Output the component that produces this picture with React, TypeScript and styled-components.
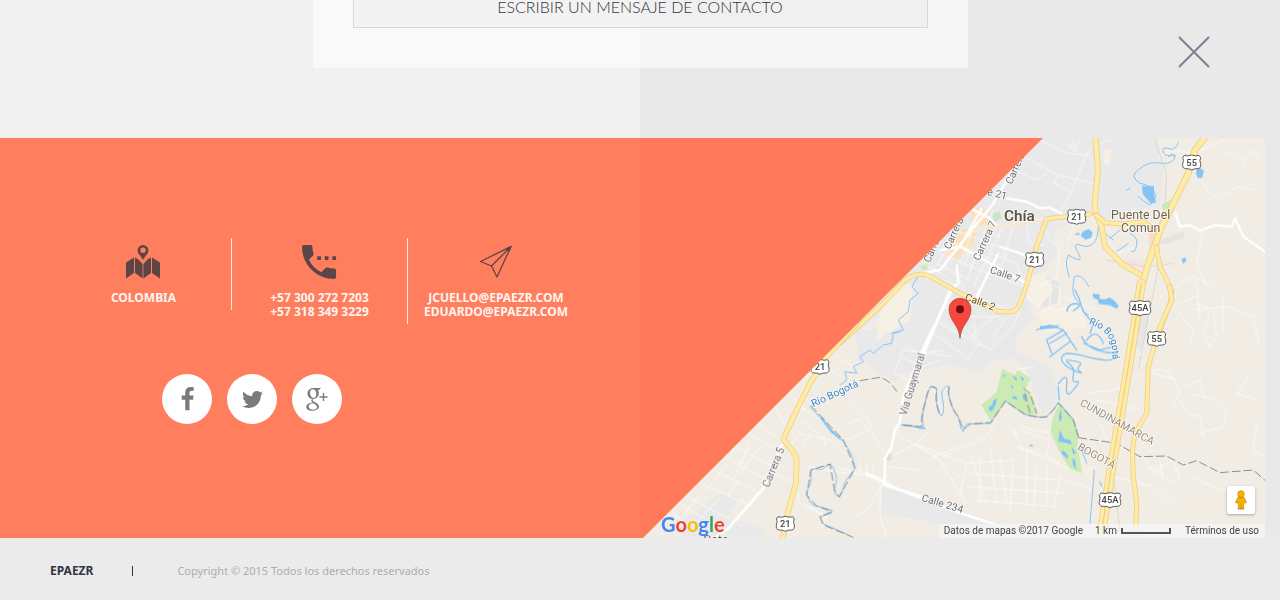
import React from "react";
import styled, { createGlobalStyle } from "styled-components";
import { FaTwitter } from "react-icons/fa";

const GlobalStyle = createGlobalStyle`
  *, *::before, *::after { box-sizing: border-box; }
  body {
    margin: 0;
    background: #ebebeb;
    font-family: "Noto Sans", "Open Sans", sans-serif;
  }
`;

const Page = styled.main`
  position: relative;
  display: flex;
  flex-direction: column;
  min-height: 100vh;
  overflow: hidden;
`;

const Intro = styled.section`
  display: flex;
  justify-content: center;
  padding-bottom: 70px;
  background: linear-gradient(90deg, #f1f1f1 50%, #e9e9e9 50%);
`;

const FormCard = styled.div`
  width: 100%;
  max-width: 655px;
  margin-top: -14px;
  padding: 0 40px 40px;
  background: rgba(255, 255, 255, 0.6);
`;

const MessageButton = styled.button`
  display: block;
  width: 100%;
  height: 42px;
  padding: 0;
  border: 1px solid #d6d8d8;
  background: rgba(0, 0, 0, 0.024);
  color: #33333a;
  font: 300 16px/20px Lato, sans-serif;
  text-transform: uppercase;
  cursor: pointer;
`;

const CloseButton = styled.button`
  position: absolute;
  top: 36px;
  right: 70px;
  width: 32px;
  height: 32px;
  padding: 0;
  border: 0;
  background: none;
  color: #7d8194;
  cursor: pointer;
  svg { display: block; }
`;

const ContactBand = styled.section`
  display: grid;
  grid-template-columns: 1fr 1fr;
  min-height: 400px;
`;

const ContactPane = styled.div`
  padding: 100px 0 0 56px;
  background: #ff7e5d;
`;

const ContactList = styled.address`
  display: flex;
  align-items: flex-start;
  font-style: normal;
`;

const ContactItem = styled.div`
  display: flex;
  flex-direction: column;
  align-items: center;
  gap: 12px;
  width: 176px;
  padding: 7px 0 5px;
  color: #fff4f0;
  font: 700 12px/14px "Noto Sans", sans-serif;
  white-space: nowrap;
  &:not(:last-child) { border-right: 1px solid #ffe6df; }
  > svg { display: block; color: #5c4547; }
`;

const ContactLines = styled.div`
  display: flex;
  flex-direction: column;
  align-items: center;
`;

const ContactLink = styled.a`
  color: inherit;
  text-decoration: none;
`;

const SocialList = styled.nav`
  display: flex;
  gap: 15px;
  margin-top: 50px;
  padding-left: 106px;
`;

const SocialLink = styled.a`
  display: flex;
  align-items: center;
  justify-content: center;
  width: 50px;
  height: 50px;
  border-radius: 50%;
  background: #fff;
  color: #7a7a7a;
`;

const MapColumn = styled.div`
  position: relative;
  padding-right: 15px;
  background: #e9e9e9;
  &::before {
    content: "";
    position: absolute;
    inset: 0;
    z-index: 1;
    background: #ff795a;
    clip-path: polygon(0 0, 403px 0, 3px 100%, 0 100%);
    pointer-events: none;
  }
`;

const MapFrame = styled.div`
  position: relative;
  height: 100%;
  overflow: hidden;
  background: #f1ede5;
`;

const MapDrawing = styled.svg`
  display: block;
  width: 100%;
  height: 400px;
`;

const GoogleMark = styled.a`
  position: absolute;
  left: 21px;
  bottom: 1px;
  z-index: 2;
  font: 700 20px/26px Lato, sans-serif;
  text-decoration: none;
`;

const MarkLetter = styled.span<{ $color: string }>`
  color: ${(p) => p.$color};
`;

const MapCredits = styled.div`
  position: absolute;
  right: 0;
  bottom: 0;
  display: flex;
  align-items: center;
  gap: 12px;
  height: 14px;
  padding: 0 6px 0 5px;
  background: rgba(245, 245, 245, 0.75);
  color: #444;
  font: 400 10px/14px Roboto, sans-serif;
  white-space: nowrap;
`;

const MapScale = styled.span`
  display: flex;
  align-items: center;
  gap: 4px;
  margin-right: 2px;
`;

const ScaleBar = styled.span`
  width: 50px;
  height: 6px;
  border: 2px solid #555;
  border-top: 0;
`;

const CreditLink = styled.a`
  color: inherit;
  text-decoration: none;
`;

const StreetViewButton = styled.button`
  position: absolute;
  right: 10px;
  bottom: 24px;
  display: flex;
  align-items: center;
  justify-content: center;
  width: 28px;
  height: 28px;
  padding: 0;
  border: 0;
  border-radius: 2px;
  background: #fff;
  box-shadow: 0 1px 3px rgba(0, 0, 0, 0.3);
  cursor: pointer;
`;

const Footer = styled.footer`
  display: flex;
  align-items: center;
  flex: 1;
  padding: 4px 50px 0;
  min-height: 62px;
  background: #ebebeb;
`;

const Brand = styled.strong`
  color: #34373f;
  font-size: 12px;
  line-height: 16px;
`;

const Copyright = styled.small`
  margin-left: 39px;
  padding-left: 44px;
  color: #adadad;
  font-size: 11px;
  line-height: 10px;
  border-left: 1px solid #34373f;
`;

const MapIcon = () => (
  <svg width="36" height="34" viewBox="1 0 36 34" fill="currentColor" aria-hidden="true">
    <path fillRule="evenodd" d="M18 0a5.4 5.4 0 0 0-5.4 5.4c0 3.4 3.4 5.400 5.400 9.600 2-4.200 5.400-6.200 5.400-9.600A5.400 5.400 0 0 0 18 0zm0 2.600a2.700 2.700 0 1 1 0 5.400 2.700 2.700 0 0 1 0-5.400z" />
    <path d="M1 17.500l8-5V28l-8 5.500zM10 12.500l3.500 2L17.600 19v14.500L10 28zM18.400 19l4.100-4.500 3.500-2V28l-7.600 5.500zM27 12.500l8 5v16L27 28z" />
  </svg>
);

const PhoneIcon = () => (
  <svg width="36" height="34" viewBox="3 3 19 18" fill="currentColor" aria-hidden="true">
    <path d="M11 9h2v2h-2zM15 9h2v2h-2zM19 9h2v2h-2zM20 15.500c-1.250 0-2.450-.2-3.570-.57-.35-.11-.74-.03-1.020.24l-2.200 2.200a15.050 15.050 0 0 1-6.590-6.580l2.200-2.210c.28-.27.36-.66.25-1.010A11.400 11.400 0 0 1 8.500 4c0-.55-.45-1-1-1H4c-.55 0-1 .45-1 1 0 9.390 7.610 17 17 17 .55 0 1-.45 1-1v-3.500c0-.55-.45-1-1-1z" />
  </svg>
);

const PlaneIcon = () => (
  <svg width="34" height="34" viewBox="0 0 34 34" fill="none" stroke="currentColor" strokeWidth="1.300" strokeLinejoin="round" aria-hidden="true">
    <path d="M32 1.500L1.500 16.500l11 4.500L18 32zM12.500 21L32 1.500" />
    <path d="M32 1.500l-5 3 3 1.500z" fill="currentColor" />
  </svg>
);

const FacebookIcon = () => (
  <svg width="25" height="25" viewBox="0 0 1792 1792" fill="currentColor" aria-hidden="true">
    <path d="M1343 12v264h-157q-86 0-116 36t-30 108v189h293l-39 296h-254v759h-306v-759h-255v-296h255v-218q0-186 104-288.500t277-102.500q147 0 228 12z" />
  </svg>
);

const GooglePlusIcon = () => (
  <svg width="22" height="24" viewBox="0 0 22 24" fill="none" stroke="currentColor" aria-hidden="true">
    <path fill="currentColor" stroke="none" fillRule="evenodd" d="M7.300 1C4 1 1.500 3.300 1.500 6.600c0 3.200 2.400 5.400 5.600 5.400 3.400 0 5.700-2.500 5.700-5.700C12.800 3 10.500 1 7.300 1zM6.800 2.200c2.100 0 3.500 2.100 3.500 4.700 0 2.400-1 4-2.800 4C5.400 10.900 4 8.600 4 6.100c0-2.300 1-3.900 2.800-3.900z" />
    <path d="M7.300 1.500h7l-1.400 1h-3" strokeWidth="1" />
    <path fill="currentColor" stroke="none" fillRule="evenodd" d="M8 11.500c-2 1-1.700 1.900-.5 2.700 2.800 1.800 5.500 2.600 5.500 5.400 0 2.700-2.900 4.200-6.500 4.200C2.800 23.800.3 22.400.3 20c0-2.800 3-4.200 6.400-4.500-1.700-1.200-2-2.600-.2-4zM7.200 16.300c-2.500.1-4.500 1.200-4.500 3.200 0 2 1.800 3.200 4.400 3.200 2.500 0 3.900-1.100 3.900-2.700 0-1.700-1.500-2.400-3.800-3.700z" />
    <path d="M17.500 6v8M13.500 10h8" strokeWidth="1.400" />
  </svg>
);

const Pegman = () => (
  <svg width="14" height="20" viewBox="0 0 14 20" aria-hidden="true">
    <ellipse cx="7" cy="18.500" rx="4" ry="1.200" fill="#c9c9c9" />
    <path d="M4 7h6l2.500 5.500-1.500.7-1-1.700L9.300 19H4.700L4 11.500l-1 1.700-1.500-.7z" fill="#f5b400" stroke="#d68a00" strokeWidth=".7" />
    <circle cx="7" cy="4" r="3.300" fill="#f5b400" stroke="#d68a00" strokeWidth=".7" />
    <path d="M4.700 7h4.600L7 9.500z" fill="#e08c00" />
    <path d="M7 13v6" stroke="#d68a00" strokeWidth=".8" />
  </svg>
);

const Shield = ({ x, y, label }: { x: number; y: number; label: string }) => {
  const w = label.length > 2 ? 32 : 27;
  return (
    <g transform={`translate(${x} ${y})`}>
      <path
        d={`M${-w + 5}-21Q${-w / 2}-17 0-22Q${w / 2}-17 ${w - 5}-21L${w}-14Q${w - 5}-6 ${w} 4Q${w + 2} 18 ${w - 9} 19Q8 18 0 23Q-8 18 ${9 - w} 19Q${-w - 2} 18 ${-w} 4Q${5 - w}-6 ${-w}-14Z`}
        fill="#fff" stroke="#5c5c5c" strokeWidth="3"
      />
      <text y="10" textAnchor="middle" fontSize="28" fontWeight="500" fill="#444">{label}</text>
    </g>
  );
};

type LabelProps = {
  x: number; y: number; angle?: number; size?: number; color?: string;
  weight?: number; anchor?: "start" | "middle"; children: string;
};

const MapLabel = ({ x, y, angle = 0, size = 31, color = "#6d6d6d", weight = 400, anchor = "start", children }: LabelProps) => (
  <text
    transform={`translate(${x} ${y}) rotate(${angle})`}
    fontSize={size} fontWeight={weight} fill={color} textAnchor={anchor}
    stroke="#fff" strokeOpacity=".75" strokeWidth="5" strokeLinejoin="round" paintOrder="stroke"
  >
    {children}
  </text>
);

const Highway = ({ d, width = 15 }: { d: string; width?: number }) => (
  <g fill="none" strokeLinejoin="round" strokeLinecap="round">
    <path d={d} stroke="#ecd089" strokeWidth={width} />
    <path d={d} stroke="#ffeba6" strokeWidth={width - 5} />
  </g>
);

/* The drawing uses three units for each pixel; every district has its own origin. */
const NORTH = "translate(660 -24)";
const WEST = "translate(0 576)";
const SOUTH = "translate(780 456)";

const CityMap = () => (
  <MapDrawing viewBox="0 0 1875 1200" preserveAspectRatio="xMinYMin slice" fontFamily="Roboto, sans-serif" role="img" aria-label="Mapa de Chía">
    <rect width="2600" height="1200" fill="#f1ede5" />

    <g fill="#e9e9e9">
      <g transform={NORTH}>
        <path d="M400 24H890L912 120 900 230 800 240 735 270 690 240 640 280 580 300 590 380 540 440 520 520 480 580 440 620 120 620 60 560-60 640Z" />
        <path d="M890 335l80-32 5 18-60 22zM560 440l40 20-10 60-50 10z" fill="#e4e4e2" />
      </g>
      <g transform={SOUTH}>
        <path d="M70 0H395L385 60 410 90 350 130 350 185 440 225 475 290 470 340 430 372 405 320 385 250 340 205 280 210 240 250 150 225 70 240 0 250-130 210-110 130 0 110Z" />
        <path d="M-50 590L0 602 150 650 330 710 370 745H250L120 700-60 670Z" />
        <path d="M720 60l30 10-25 110-15-10z" fill="#e6e6e8" />
      </g>
      <g transform={WEST}>
        <path d="M640 0H860L770 160 720 130 660 90ZM730 470L960 540V620L860 570 730 545ZM240 490L300 500 260 560 380 600 350 625H150L90 600Z" />
        <path d="M740 365l20 10-10 18-15-5z" fill="#dcdcdc" />
      </g>
    </g>

    <g fill="#f6f0e4" transform={NORTH}>
      <path d="M735 55l20 5-5 45-20-5zM500 440l50-10 30 50-40 50-40-20zM70 480l90-20-10 110-100 60zM540 540l130-20 10 70-130 20z" />
      <path d="M330 240l40-10 20 50-50 10zM300 300l50-10-10 60-50 40-40-10z" fill="#fae0bf" />
      <path d="M790 385l55 5 10 28-50-8z" fill="#f7e2e6" />
      <path d="M865 310l30-5 5 60-30 0z" fill="#fbdcc4" />
    </g>

    <g fill="#ccebb4">
      <path transform={NORTH} d="M905 225l30-18 10 18-35 16zM180 410l20-12 8 10-15 14z" />
      <path transform={NORTH} d="M398 250l20-6 8 18-18 14-10-10z" fill="#cfe3cb" />
      <path transform={SOUTH} d="M306 237L345 255 352 240 392 265 375 300 395 315 414 373 375 375 316 333 272 392 243 345 290 305ZM478 338L520 385 535 440 532 470 548 555 512 540 475 480 452 425 458 385Z" />
    </g>

    <g fill="none" stroke="#fff" strokeWidth="3" opacity=".7" strokeLinejoin="round">
      <g transform={NORTH}>
        <path d="M500 85L594 135 720 165M594 135L580 160 640 190M690 50L640 170 600 250M660 30l-20 30M620 45l30 20M635 40l20 20M625 60l15-30M540 30L620 70 690 75M720 40l30-10M440 110L530 150 560 130" />
        <path d="M400 240L380 290 330 420M430 290L400 350 340 470M460 290L430 380M240 370L310 400 520 480M260 330L400 390M230 400L330 450M280 300L420 350M220 440L300 470M300 280L250 420M350 270L300 400M370 300L420 320M390 370L470 400 490 460M330 350l-20 60M360 350l-40 100M415 370L380 450M440 375L410 440M260 360L200 450M190 400L260 440M350 500L450 540M300 450L330 530M250 530L330 560 420 560M400 560L330 620M440 560L400 620" />
        <path d="M500 295L510 340 550 345M560 300L570 330 600 350M520 250L500 290M610 270L640 290 620 340M600 350L590 440 550 460 530 500M550 460L600 470 600 520 540 550M570 450V540M590 540L650 530 670 580M610 500L700 540M500 500L540 530" />
        <path d="M895 80L940 60 1000 70 1090 30M1080 80L1120 60 1150 90 1180 60 1200 90M1150 90L1160 120M1010 140L1060 200 1080 190M1090 200L1130 170 1180 180M1030 290L1010 400 1040 470M740 330L770 370 830 350M900 500L1000 440 1060 470M1000 540L1100 530 1180 560M1010 460L1020 570M1090 500V600M960 520L1030 490" />
      </g>
      <g transform={SOUTH}>
        <path d="M120 100L270 180 340 110 370 30M170 90L230 150 220 100M100 130L200 200M230 150L270 180M200 210L240 160M20 170L60 190 130 180M0 200L70 230 120 210M350 240L400 230M360 420L450 450 440 500 360 470 340 410M360 410L450 430" />
        <path d="M0 440L110 500 200 640M40 460L200 520 340 510M200 520L180 620M210 490L260 640M240 500V650M270 470L290 640M300 500L320 640M340 510L330 660M380 480V640M410 520L400 660M440 530V640M210 550L480 570M200 590L500 610M220 630L470 650M130 500L260 440 290 390M350 470L540 550 590 530M480 560L460 660M500 570L580 600M320 400L350 440M440 500L480 520" />
        <path d="M560 310L640 300 680 290M590 330L680 350 720 360M600 400L620 450M640 560L760 590 840 660M730 500L760 540 820 510 840 570M750 560L790 530M740 530l90 50M780 510l10 70M740 210L760 250 830 270M740 240L800 240 840 300 820 350M850 290L900 270 910 320M870 310L940 330 980 370 970 410 900 430M840 330L860 370 900 380 910 440M830 60L880 120 870 160M890 40L940 60 950 140 930 170 910 130 930 70M1060 90L1080 170M1050 250L1010 310 1070 330M1070 400L1060 480 1090 500M870 560L960 600 1060 590M720 140L680 160M730 190L690 200" />
      </g>
      <g transform={WEST}>
        <path d="M440 180L490 240M400 220L430 280M350 280L420 330M320 310L410 360M290 350L400 410M250 380L380 450M220 420L360 490M180 460L340 530M140 500L310 590M300 320L270 380 310 400M360 350L300 430M260 400L200 480M240 500L150 600M330 340L280 450M420 410L370 440M410 430L460 460 480 520 560 560M440 360L480 310 570 330 640 400M480 270L560 330M510 310L490 350M540 310L560 350M460 220L600 300M500 410L620 430 720 440M620 330L690 300 740 380M690 300L660 270 620 280M600 180L670 250 700 300M480 150L560 110 600 140M580 70L640 110M760 130L790 60 940 80M760 130L830 160M750 380L830 340 870 370 960 440M830 340L870 300M880 380L960 350M640 410L720 460M660 390V440M680 410V450M700 400V450M650 430L590 410M740 410L840 420M730 460L680 540 650 560M720 460V560L740 620M120 520L200 570M100 550L170 610M170 500L130 560M300 450L260 500M490 520L560 560 540 600" />
      </g>
    </g>

    <g fill="none" stroke="#fff" strokeLinejoin="round" strokeLinecap="round">
      <g transform={NORTH} strokeWidth="7">
        <path d="M475 90L400 220 240 420 180 430M440 205L500 215 540 235 570 232 610 255 640 258M340 240L390 265 410 290M560 268L340 300M290 405L295 460 270 480 180 700M420 350L480 370 520 390M365 235L300 350 240 360M300 350L500 460M415 370L350 500" />
        <path d="M945 248L960 290 990 285 1020 302 1065 285 1115 290 1125 265 1150 320 1216 366" />
      </g>
      <path transform={NORTH} d="M560 270L340 300" stroke="#fbe3c2" strokeWidth="6" />
      <g transform={SOUTH} strokeWidth="8">
        <path d="M155 0L60 200M-100 550L0 600 155 660 320 715M240 0L230 25" />
      </g>
      <g transform={WEST} strokeWidth="8">
        <path d="M875 0L840 80 790 200 780 275 765 300 755 350 735 385 733 465 845 500M425 345L370 475 265 595 230 620" />
      </g>
    </g>

    <g fill="none" stroke="#86c3f5" strokeWidth="4" strokeLinejoin="round" strokeLinecap="round">
      <g transform={NORTH}>
        <path d="M955 38Q946 62 932 57T910 55Q905 68 918 75T945 75Q946 88 935 95T910 100Q890 96 870 100T835 120Q820 130 822 140T840 160Q862 162 875 175T887 200 870 225Q852 215 835 200M925 80q10-15 20 0M800 180l10-5M715 290Q715 325 700 340T660 345 655 370 625 375Q616 390 620 410T628 440M686 470Q672 440 655 438T642 450Q636 475 640 490T665 530Q668 548 685 555M650 520Q630 520 625 530T622 545M735 310L760 330M780 300L750 325M810 310Q835 320 830 345T815 365M805 340L770 365" strokeWidth="3" />
        <path d="M180 430L155 470 175 490 150 510 145 545 115 570 130 600 95 610" strokeWidth="3" />
      </g>
      <g transform={SOUTH}>
        <path d="M525 0L535 20 550 65 580 100 570 130M545 140Q560 170 590 180T650 190Q650 208 630 210T580 205 540 195 500 190Q482 195 485 210T520 240 540 245 540 225 500 210M500 215Q525 230 520 255T530 275 520 300 500 285 475 282M475 290L478 330M410 120L450 105 490 120 510 150 530 180M440 150L490 120M450 160L500 130M450 200L510 155M440 150L455 190M500 60Q510 40 530 42T520 62M560 150q30-40 50 10M550 160l50 20 40-10" />
        <path d="M5 405L40 408Q70 420 72 415 62 390 75 340 85 290 95 290 112 292 110 300 106 330 112 350 118 378 125 375 134 372 130 340 122 305 128 300 144 282 147 290 142 310 150 330 158 362 175 380 182 420 190 425 192 402 205 402L270 400 316 333 375 373Q420 385 440 380 462 360 475 338L520 390 535 440M540 465L560 520M583 540L570 700" strokeWidth="3" />
      </g>
      <g transform={WEST}>
        <path d="M510 230L560 285 610 335Q635 370 640 390L645 415 615 455Q605 495 598 502 584 495 583 480L590 450Q584 410 570 402L545 418Q515 415 513 420L512 460Q495 490 500 495 510 520 520 525L575 540V550L540 560 548 580Q590 600 620 612M600 165L620 150 615 125 650 130 640 110 670 95 660 80 690 60 700 70 730 45 755 40 760 10 780 5M785 285L855 295" strokeWidth="3" />
        <path d="M545 265L575 305 600 325" strokeWidth="7" />
      </g>
    </g>

    <g fill="#86c3f5">
      <path transform={NORTH} d="M1012 108l20 14-6 22-14 0-4-16zM846 168l36 0 0 26 6 24-16 2-24-28zM668 305l18-8 12 10-4 16-18 6-14-12zM642 312l18-4-4 8zM698 490l22 4-2 12 14 2 18-6 16 12 10 14-6 8-20-10-34-4-2-12-14-6zM964 388l10-6 6 8-10 12zM540 588l60-2-10 8-50 4z" />
      <path transform={SOUTH} d="M266 350l10-4 4-16 12-6-6 22-10 18-10-4zM308 256l8-4 0 10zM336 258l14 4 0 12zM332 282l10 10-6 4zM360 258l12 6-4 10zM336 318l14 2 2 10-14-4zM368 310l12 6-2 20-10-12zM482 356l4 30-6 10-4-14zM480 420l12 26 20 4 4 14-24-6-18-4zM514 470l14 18-8 6zM518 504l8 6 2 28-10-14zM596 572l10 10-2 10zM385 468l10-6 6 8zM484 480l14 8 8 14-6 2-14-12z" />
    </g>

    <g fill="none" stroke="#8c8c8c" strokeWidth="3" strokeDasharray="26 9">
      <path transform={SOUTH} d="M535 443L650 460 720 500 800 498 850 525 890 512 960 548 1060 540 1096 572" />
      <path transform={SOUTH} d="M10 405L65 410Q62 380 75 340 85 290 95 290 112 292 110 300 106 330 112 350 118 378 127 375M148 290Q142 310 150 330 158 362 175 380L190 418 210 402 272 398 316 333 375 373Q420 385 440 380 462 360 475 338L520 390 535 440M370 295L390 310 410 370M375 310L390 370" />
      <path transform={WEST} d="M512 226L610 330 645 415 598 500 583 480 570 402 513 420 500 495 530 528 575 545 540 560 550 585 640 622M660 152L720 142Q750 150 770 185" />
    </g>
    <g fill="none" stroke="#cfcfcf" strokeWidth="2">
      <path transform={NORTH} d="M885 30L920 130 915 220 893 300 893 420 870 540M740 390L860 410 940 400" />
      <path transform={SOUTH} d="M745 80L715 240M640 560L660 720" />
    </g>

    <g transform={NORTH}>
      <Highway d="M705 10L714 120 704 220 708 250 725 290 735 350 790 405 840 433" width={18} />
      <Highway d="M690 252L560 266 530 350 515 410 500 465 480 520Q470 545 455 545L415 545 300 490 230 450Q200 430 180 433 160 434 135 450L70 520-60 640" />
      <Highway d="M708 255L735 278 790 282 850 275 886 300" />
      <Highway d="M1045 10L1005 60 985 130 940 220 905 290 885 345 865 400 845 470 828 600" width={20} />
      <Highway d="M889 350L900 410 935 480 932 515 900 600" />
    </g>
    <g transform={SOUTH}>
      <Highway d="M724-20L690 200 662 370 635 530 606 720" width={28} />
      <path d="M724-20L690 200 662 370 635 530 606 720" fill="none" stroke="#ecd089" strokeWidth="4" />
      <Highway d="M808-10L816 30 780 110 745 230 740 370 705 430 697 480 700 560 710 640 707 720" />
    </g>
    <g transform={WEST}>
      <Highway d="M650-20L560 80 510 160 470 240 430 328 455 360Q470 380 470 390L468 460 445 540 425 640" width={17} />
    </g>

    <g transform={NORTH}>
      <Shield x={995} y={97} label="55" />
      <Shield x={650} y={260} label="21" />
      <Shield x={524} y={389} label="21" />
      <Shield x={840} y={534} label="45A" />
      <MapLabel x={455} y={165} angle={-66}>Carrera</MapLabel>
      <MapLabel x={330} y={182} angle={14}>Calle 21</MapLabel>
      <MapLabel x={270} y={360} angle={-66}>Carrera</MapLabel>
      <MapLabel x={209} y={400} angle={-66}>Carrera</MapLabel>
      <MapLabel x={358} y={394} angle={-66}>Carrera 7</MapLabel>
      <MapLabel x={388} y={428} angle={19}>Calle 7</MapLabel>
      <MapLabel x={313} y={510} angle={20} color="#6f4c1e">Calle 2</MapLabel>
      <MapLabel x={478} y={273} size={46} weight={600} anchor="middle" color="#5d5447">Chía</MapLabel>
      <MapLabel x={842} y={267} size={37} anchor="middle" color="#6d5f4a">Puente Del</MapLabel>
      <MapLabel x={842} y={306} size={37} anchor="middle" color="#6d5f4a">Comun</MapLabel>
    </g>
    <g transform={SOUTH}>
      <Shield x={770} y={146} label="55" />
      <Shield x={630} y={630} label="45A" />
      <MapLabel x={538} y={345} angle={29} size={32} color="#9b8f7b">CUNDINAMARCA</MapLabel>
      <MapLabel x={531} y={477} angle={29} size={32} color="#9b8f7b">BOGOTÁ</MapLabel>
      <path id="river-bend" d="M566 102Q620 118 632 155 640 180 636 240" fill="none" />
      <text fontSize="29" fill="#3d84c4" stroke="#fff" strokeOpacity=".7" strokeWidth="4" paintOrder="stroke">
        <textPath href="#river-bend">Río Bogotá</textPath>
      </text>
      <path d="M180 145C178 105 147 92 147 58a33 33 0 0 1 66 0C213 92 182 105 180 145z" fill="#f5483e" stroke="#b5302a" strokeWidth="2" />
      <circle cx="180" cy="58" r="12" fill="#6b0f10" />
    </g>
    <g transform={WEST}>
      <Shield x={540} y={110} label="21" />
      <Shield x={436} y={581} label="21" />
      <MapLabel x={386} y={474} angle={-68}>Carrera 5</MapLabel>
      <MapLabel x={798} y={258} angle={-73} size={30}>Vía Guaymaral</MapLabel>
      <MapLabel x={843} y={512} angle={17}>Calle 234</MapLabel>
      <MapLabel x={520} y={232} angle={-25} color="#3d84c4">Río Bogotá</MapLabel>
      <MapLabel x={190} y={642} size={36} color="#6d5f4a">Cota</MapLabel>
    </g>
  </MapDrawing>
);

const letters: [string, string][] = [
  ["G", "#4285f4"], ["o", "#ea4335"], ["o", "#fbbc05"],
  ["g", "#4285f4"], ["l", "#34a853"], ["e", "#ea4335"],
];

export default function App() {
  return (
    <Page>
      <GlobalStyle />
      <Intro>
        <FormCard>
          <MessageButton type="button">Escribir un mensaje de contacto</MessageButton>
        </FormCard>
      </Intro>
      <CloseButton type="button" aria-label="Cerrar">
        <svg width="32" height="32" viewBox="0 0 32 32" stroke="currentColor" strokeWidth="2">
          <path d="M1 1l30 30M31 1L1 31" />
        </svg>
      </CloseButton>

      <ContactBand>
        <ContactPane>
          <ContactList>
            <ContactItem>
              <MapIcon />
              <ContactLines>COLOMBIA</ContactLines>
            </ContactItem>
            <ContactItem>
              <PhoneIcon />
              <ContactLines>
                <ContactLink href="tel:+573002727203">+57 300 272 7203</ContactLink>
                <ContactLink href="tel:+573183493229">+57 318 349 3229</ContactLink>
              </ContactLines>
            </ContactItem>
            <ContactItem>
              <PlaneIcon />
              <ContactLines>
                <ContactLink href="mailto:jcuello@epaezr.com">JCUELLO@EPAEZR.COM</ContactLink>
                <ContactLink href="mailto:eduardo@epaezr.com">EDUARDO@EPAEZR.COM</ContactLink>
              </ContactLines>
            </ContactItem>
          </ContactList>
          <SocialList aria-label="Redes sociales">
            <SocialLink href="#facebook" aria-label="Facebook"><FacebookIcon /></SocialLink>
            <SocialLink href="#twitter" aria-label="Twitter"><FaTwitter size={21} /></SocialLink>
            <SocialLink href="#google-plus" aria-label="Google Plus"><GooglePlusIcon /></SocialLink>
          </SocialList>
        </ContactPane>
        <MapColumn>
          <MapFrame>
            <CityMap />
            <StreetViewButton type="button" aria-label="Street View"><Pegman /></StreetViewButton>
            <MapCredits>
              <span>Datos de mapas ©2017 Google</span>
              <MapScale>1 km <ScaleBar /></MapScale>
              <CreditLink href="#terminos">Términos de uso</CreditLink>
            </MapCredits>
          </MapFrame>
          <GoogleMark href="#google" aria-label="Google">
            {letters.map(([letter, color], i) => (
              <MarkLetter key={i} $color={color}>{letter}</MarkLetter>
            ))}
          </GoogleMark>
        </MapColumn>
      </ContactBand>

      <Footer>
        <Brand>EPAEZR</Brand>
        <Copyright>Copyright © 2015 Todos los derechos reservados</Copyright>
      </Footer>
    </Page>
  );
}
